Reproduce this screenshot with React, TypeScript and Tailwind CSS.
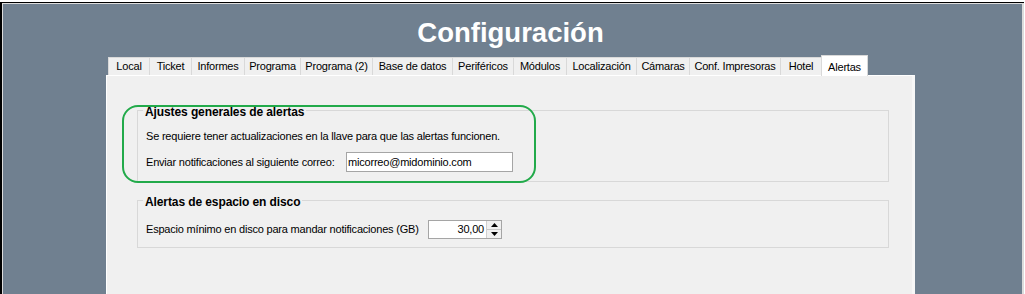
import React from 'react';

const tabs = [
  { label: 'Local', w: 'w-[41px]' },
  { label: 'Ticket', w: 'w-[42px]' },
  { label: 'Informes', w: 'w-[53px]' },
  { label: 'Programa', w: 'w-[56px]' },
  { label: 'Programa (2)', w: 'w-[72px]' },
  { label: 'Base de datos', w: 'w-[80px]' },
  { label: 'Periféricos', w: 'w-[61px]' },
  { label: 'Módulos', w: 'w-[53px]' },
  { label: 'Localización', w: 'w-[70px]' },
  { label: 'Cámaras', w: 'w-[53px]' },
  { label: 'Conf. Impresoras', w: 'w-[91px]' },
  { label: 'Hotel', w: 'w-[41px]' },
];

function Spinner() {
  return (
    <div className="flex flex-col w-[15px] h-full border-l border-[#d0d0d0]">
      <button className="flex-1 flex items-center justify-center bg-[#f0f0f0] border-b border-[#c8c8c8]">
        <svg width="7" height="4" viewBox="0 0 7 4">
          <path d="M3.5 0 L7 4 L0 4 Z" fill="#000" />
        </svg>
      </button>
      <button className="flex-1 flex items-center justify-center bg-[#f0f0f0]">
        <svg width="7" height="4" viewBox="0 0 7 4">
          <path d="M0 0 L7 0 L3.5 4 Z" fill="#000" />
        </svg>
      </button>
    </div>
  );
}

export default function App() {
  return (
    <div className="w-[1025px] h-[294px] bg-white overflow-hidden pt-[2px] font-['Liberation_Sans',Arial,sans-serif] text-black">
      <div className="w-[1024px] h-[292px] border-t border-l-2 border-black">
        <div className="h-full flex border-t border-l border-r-2 border-[#dcdcdc] bg-[#708090] pl-[103px]">
          <div className="w-[809px] flex flex-col">
            {/* Title */}
            <div className="h-[51px] pt-[15px] text-center">
              <h1 className="text-[27.5px] leading-[28px] font-bold text-white">Configuración</h1>
            </div>

            {/* Tabs */}
            <div className="flex items-end h-[20px] pl-[2px] text-[11px] tracking-[-0.2px]">
              {tabs.map((t) => (
                <div
                  key={t.label}
                  className={`${t.w} h-[18px] flex items-center justify-center bg-[#f0f0f0] border-t border-l border-[#d9d9d9] whitespace-nowrap`}
                >
                  {t.label}
                </div>
              ))}
              <div className="w-[47px] h-[21px] -mb-px relative z-10 flex items-start pt-[3px] justify-center bg-white border-t border-l border-r border-[#d9d9d9]">
                Alertas
              </div>
            </div>

            {/* Page */}
            <div className="relative flex-1 bg-[#f0f0f0] border-t border-l border-white border-r-[3px] border-r-[#f7f7f7] pl-[30px] text-[11px] tracking-[-0.2px]">
              <fieldset className="mt-[25px] w-[752px] h-[81px] border border-[#d8d8d8] pl-[8px]">
                <legend className="-ml-[3px] px-[2px] pt-[4px] text-[12px] leading-[14px] font-bold tracking-[-0.1px]">
                  Ajustes generales de alertas
                </legend>
                <div className="h-[13px] mt-[11px] flex items-center">
                  Se requiere tener actualizaciones en la llave para que las alertas funcionen.
                </div>
                <div className="h-[20px] mt-[9px] flex items-center">
                  <span className="w-[200px]">Enviar notificaciones al siguiente correo:</span>
                  <div className="w-[167px] h-[20px] bg-white border border-[#a5a5a5] flex items-center pl-[1px]">
                    micorreo@midominio.com
                  </div>
                </div>
              </fieldset>

              <fieldset className="mt-[9px] w-[752px] h-[57px] border border-[#d8d8d8] pl-[8px]">
                <legend className="-ml-[3px] px-[2px] pt-[4px] text-[12px] leading-[14px] font-bold tracking-[-0.1px]">
                  Alertas de espacio en disco
                </legend>
                <div className="h-[19px] mt-[11px] flex items-center">
                  <span className="w-[282px]">Espacio mínimo en disco para mandar notificaciones (GB)</span>
                  <div className="w-[74px] h-[19px] bg-white border border-[#a5a5a5] flex">
                    <div className="flex-1 flex items-center justify-end pr-[2px]">30,00</div>
                    <Spinner />
                  </div>
                </div>
              </fieldset>

              {/* highlight annotation */}
              <div className="absolute left-[15px] top-[29px] w-[414px] h-[78px] rounded-[16px] border-[2.5px] border-[#22aa4a] pointer-events-none" />
            </div>
          </div>
        </div>
      </div>
    </div>
  );
}
